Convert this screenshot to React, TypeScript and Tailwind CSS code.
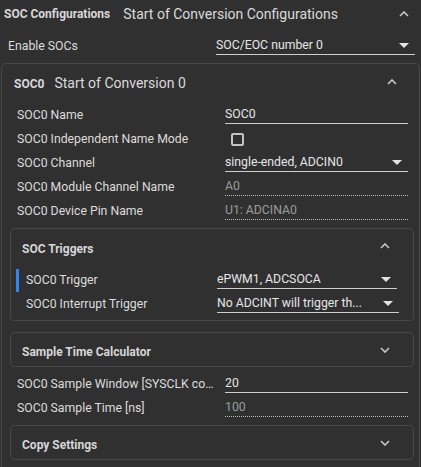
import React from 'react';

const font = { fontFamily: 'Roboto, "Noto Sans", sans-serif' };

function ChevronUp({ className = '' }: { className?: string }) {
  return (
    <svg width="10" height="6" viewBox="0 0 10 6" className={className}>
      <polyline points="1,5 5,1 9,5" fill="none" stroke="#c8c8c8" strokeWidth="1.6" />
    </svg>
  );
}

function ChevronDown({ className = '' }: { className?: string }) {
  return (
    <svg width="10" height="6" viewBox="0 0 10 6" className={className}>
      <polyline points="1,1 5,5 9,1" fill="none" stroke="#c8c8c8" strokeWidth="1.6" />
    </svg>
  );
}

function Caret() {
  return (
    <svg width="10" height="5" viewBox="0 0 10 5" className="shrink-0">
      <polygon points="0,0 10,0 5,5" fill="#e4e4e4" />
    </svg>
  );
}

function Row({ label, children }: { label: string; children: React.ReactNode }) {
  return (
    <div className="h-6 flex items-center">
      <div className="w-[223px] shrink-0 pl-[15px] pr-[10px] truncate text-[12.25px] text-[#dcdcdc]">{label}</div>
      {children}
    </div>
  );
}

function TextField({ value }: { value: string }) {
  return (
    <div className="w-[183px] h-[18px] flex items-center border-b border-[#cfcfcf] text-[12.25px] text-[#e6e6e6] leading-none">
      {value}
    </div>
  );
}

function ReadOnly({ value }: { value: string }) {
  return (
    <div className="w-[183px] h-[18px] flex items-center border-b border-dotted border-[#bdbdbd] text-[12.25px] text-[#9c9c9c] leading-none">
      {value}
    </div>
  );
}

function Select({ value, width = 'w-[183px]' }: { value: string; width?: string }) {
  return (
    <div className={`${width} h-[18px] flex items-center justify-between pr-[6px] border-b border-[#cfcfcf] text-[12.25px] text-[#e6e6e6] leading-none`}>
      <span className="truncate">{value}</span>
      <Caret />
    </div>
  );
}

function CollapsedCard({ title }: { title: string }) {
  return (
    <div className="ml-[8px] mr-[5px] h-[35px] border border-[#474747] rounded-[4px] flex items-start justify-between pl-[11px] pr-[23px] pt-[11px]">
      <span className="text-[12px] font-bold text-[#d6d6d6] leading-4">{title}</span>
      <ChevronDown className="mt-[3px]" />
    </div>
  );
}

export default function App() {
  return (
    <div className="w-[421px] h-[467px] bg-[#303030] overflow-hidden text-[#e0e0e0]" style={font}>
      <div className="h-[28px] flex items-center pl-[4px] pr-[12px]">
        <span className="text-[12px] font-bold text-[#d8d8d8]">SOC Configurations</span>
        <span className="ml-[13px] text-[14px] text-[#dadada]">Start of Conversion Configurations</span>
        <ChevronUp className="ml-auto" />
      </div>

      <div className="h-6 mt-[6px] flex items-center">
        <div className="w-[216px] pl-[8px] text-[12.25px] text-[#dcdcdc]">Enable SOCs</div>
        <Select value="SOC/EOC number 0" width="w-[199px]" />
      </div>

      <div className="mt-[5px] ml-[1px] w-[419px] border border-[#474747] rounded-t-[5px] pb-[40px]">
        <div className="h-[39px] flex items-center pl-[12px] pr-[22px]">
          <span className="text-[12px] font-bold text-[#d8d8d8]">SOC0</span>
          <span className="ml-[10px] text-[14px] text-[#dadada]">Start of Conversion 0</span>
          <ChevronUp className="ml-auto -mt-[3px]" />
        </div>

        <Row label="SOC0 Name"><TextField value="SOC0" /></Row>
        <Row label="SOC0 Independent Name Mode">
          <div className="ml-[6px] w-[13px] h-[13px] border-2 border-[#c4c4c4] rounded-[2px]" />
        </Row>
        <Row label="SOC0 Channel"><Select value="single-ended, ADCIN0" /></Row>
        <Row label="SOC0 Module Channel Name"><ReadOnly value="A0" /></Row>
        <Row label="SOC0 Device Pin Name"><ReadOnly value="U1: ADCINA0" /></Row>

        <div className="mt-[5px] ml-[8px] mr-[5px] border border-[#474747] rounded-[4px] pb-[4px]">
          <div className="h-[39px] flex items-start justify-between pl-[11px] pr-[23px] pt-[12px]">
            <span className="text-[12px] font-bold text-[#d6d6d6] leading-4">SOC Triggers</span>
            <ChevronUp className="mt-[2px]" />
          </div>
          <div className="h-6 flex items-center">
            <div className="ml-[5px] w-[3px] h-[23px] bg-[#2f86ee]" />
            <div className="w-[198px] pl-[7px] text-[12.25px] text-[#dcdcdc] truncate">SOC0 Trigger</div>
            <Select value="ePWM1, ADCSOCA" width="w-[180px]" />
          </div>
          <div className="h-6 flex items-center">
            <div className="w-[206px] pl-[15px] text-[12.25px] text-[#dcdcdc] truncate">SOC0 Interrupt Trigger</div>
            <Select value="No ADCINT will trigger th..." width="w-[182px]" />
          </div>
        </div>

        <div className="mt-[11px]">
          <CollapsedCard title="Sample Time Calculator" />
        </div>

        <div className="mt-[5px]">
          <Row label="SOC0 Sample Window [SYSCLK count]"><TextField value="20" /></Row>
          <Row label="SOC0 Sample Time [ns]"><ReadOnly value="100" /></Row>
        </div>

        <div className="mt-[5px]">
          <CollapsedCard title="Copy Settings" />
        </div>
      </div>
    </div>
  );
}
